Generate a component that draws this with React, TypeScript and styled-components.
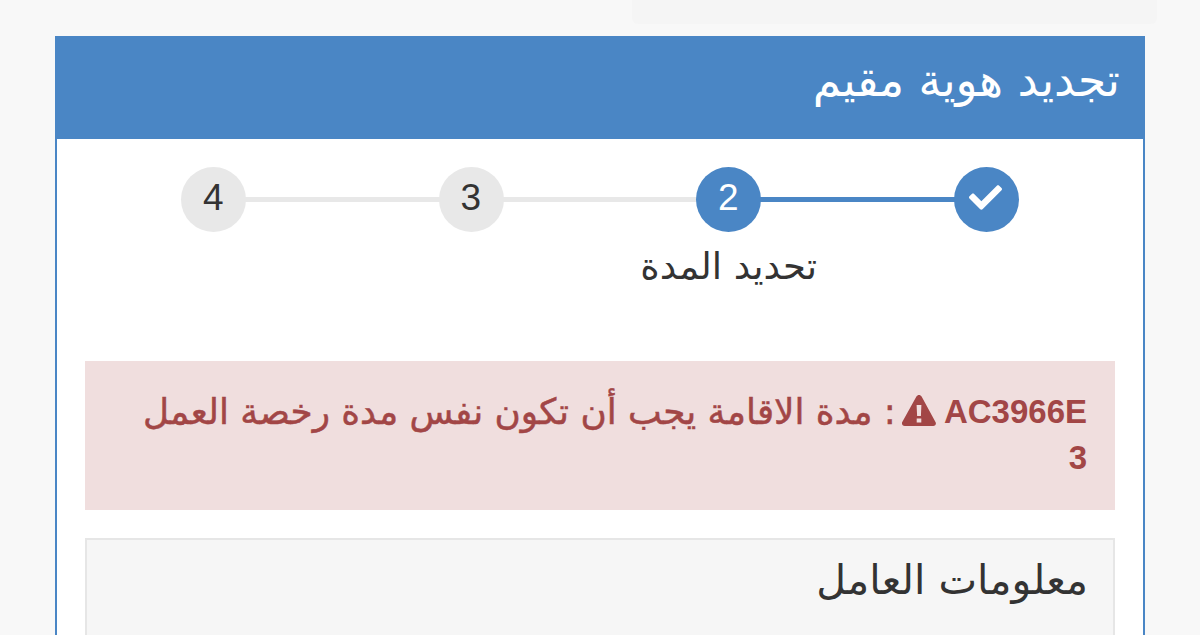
import React from "react";
import styled, { createGlobalStyle } from "styled-components";
import { FaCheck } from "react-icons/fa";

const Global = createGlobalStyle`
  html, body { margin: 0; padding: 0; background: #f8f8f8; }
  body { font-family: "Liberation Sans", "DejaVu Sans", sans-serif; color: #333; }
  * { box-sizing: border-box; }
`;

const Page = styled.div`
  height: 635px;
  overflow: hidden;
  direction: rtl;
`;

const TopStrip = styled.div`
  width: 525px;
  height: 24px;
  margin-right: 43px;
  background: #f5f5f5;
  border-radius: 0 0 6px 6px;
`;

const Panel = styled.section`
  margin: 12px 55px 0;
  border: 2px solid #4a86c5;
  background: #fff;
  height: 640px;
`;

const PanelHeader = styled.header`
  height: 101px;
  background: #4a86c5;
  color: #fff;
  display: flex;
  align-items: center;
  padding: 0 23px 16px;
`;

const PanelTitle = styled.h1`
  margin: 0;
  font-size: 45.5px;
  font-weight: 400;
  font-family: "DejaVu Sans", sans-serif;
`;

const PanelBody = styled.div`
  padding: 28px 28px 0;
`;

const Steps = styled.ol`
  display: grid;
  grid-template-columns: repeat(4, 1fr);
  list-style: none;
  margin: 0;
  padding: 0;
  height: 194px;
`;

const Step = styled.li`
  position: relative;
  display: flex;
  flex-direction: column;
  align-items: center;
`;

const Connector = styled.span<{ $done: boolean }>`
  position: absolute;
  top: 30px;
  right: 50%;
  width: 100%;
  height: 5px;
  background: ${(p) => (p.$done ? "#4a86c5" : "#e8e8e8")};
`;

const Circle = styled.span<{ $active: boolean }>`
  position: relative;
  z-index: 1;
  width: 65px;
  height: 65px;
  border-radius: 50%;
  display: flex;
  align-items: center;
  justify-content: center;
  background: ${(p) => (p.$active ? "#4a86c5" : "#e8e8e8")};
  color: ${(p) => (p.$active ? "#fff" : "#333")};
  font-size: 37px;
  padding: 0 1px 4px 0;
`;

const StepLabel = styled.span`
  margin-top: 12px;
  font-size: 37px;
  line-height: 46px;
  font-family: "DejaVu Sans", sans-serif;
  color: #333;
  white-space: nowrap;
`;

const Alert = styled.div`
  background: #f0dede;
  color: #a24646;
  font-size: 33px;
  line-height: 46px;
  font-weight: 700;
  padding: 28px 28px 29px;
  margin-bottom: 28px;
`;

const AlertMessage = styled.span`
  font-family: "DejaVu Sans", sans-serif;
  font-weight: 400;
  font-size: 35.8px;
  line-height: 40px;
  vertical-align: -1px;
  -webkit-text-stroke: 0.5px #a24646;
`;

const AlertIconSvg = styled.svg`
  width: 34px;
  height: 31px;
  vertical-align: -3px;
  margin: 0 8px 0 6px;
  fill: currentColor;
`;

const Well = styled.div`
  background: #f6f6f6;
  border: 2px solid #e6e6e6;
  padding: 15px 25px;
  height: 200px;
`;

const WellTitle = styled.h2`
  margin: 0;
  font-size: 41px;
  line-height: 50px;
  font-weight: 400;
  font-family: "DejaVu Sans", sans-serif;
  color: #333;
`;

const steps = [
  { key: 1, content: <FaCheck size={33} />, active: true, label: "" },
  { key: 2, content: "2", active: true, label: "تحديد المدة" },
  { key: 3, content: "3", active: false, label: "" },
  { key: 4, content: "4", active: false, label: "" },
];

function AlertIcon() {
  return (
    <AlertIconSvg viewBox="0 0 34 31" aria-hidden="true">
      <path
        fillRule="evenodd"
        d="M17 0c1.1 0 2 .6 2.600 1.600l14 25.600c.9 1.800-.3 3.800-2.400 3.800H2.800C.7 31-.5 29-.0 27.600L14.400 1.600C15 .6 15.900 0 17 0zM14.600 10l.5 11h3.800l.5-11h-4.800zM14.700 23.500v4h4.600v-4h-4.600z"
      />
    </AlertIconSvg>
  );
}

export default function App() {
  return (
    <Page dir="rtl">
      <Global />
      <TopStrip />
      <Panel>
        <PanelHeader>
          <PanelTitle>تجديد هوية مقيم</PanelTitle>
        </PanelHeader>
        <PanelBody>
          <Steps>
            {steps.map((s, i) => (
              <Step key={s.key}>
                {i < steps.length - 1 && <Connector $done={i === 0} />}
                <Circle $active={s.active}>{s.content}</Circle>
                {s.label && <StepLabel>{s.label}</StepLabel>}
              </Step>
            ))}
          </Steps>
          <Alert>
            <bdi>AC3966E</bdi>
            <AlertIcon />
            <AlertMessage>: مدة الاقامة يجب أن تكون نفس مدة رخصة العمل</AlertMessage>
            <br />
            3
          </Alert>
          <Well>
            <WellTitle>معلومات العامل</WellTitle>
          </Well>
        </PanelBody>
      </Panel>
    </Page>
  );
}
